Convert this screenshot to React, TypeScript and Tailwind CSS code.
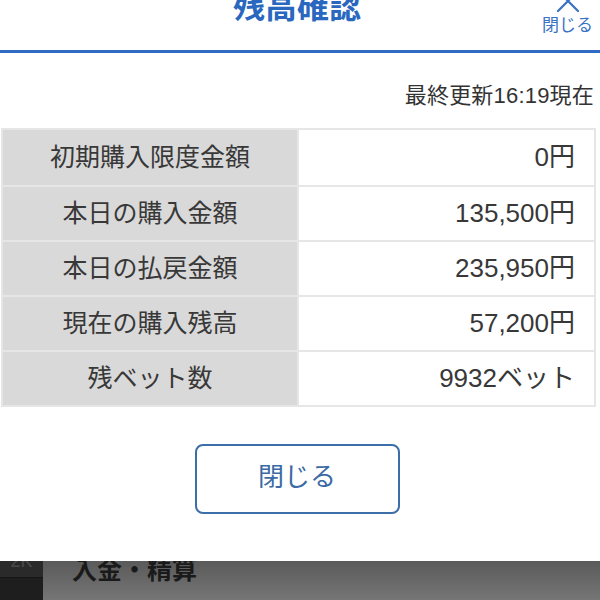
import React from 'react';

const rows = [
  { label: '初期購入限度金額', value: '0円' },
  { label: '本日の購入金額', value: '135,500円' },
  { label: '本日の払戻金額', value: '235,950円' },
  { label: '現在の購入残高', value: '57,200円' },
  { label: '残ベット数', value: '9932ベット' },
];

export default function App() {
  return (
    <div
      className="w-[600px] h-[600px] overflow-hidden flex flex-col bg-white"
      style={{ fontFamily: '"Liberation Sans", "Noto Sans CJK JP", sans-serif' }}
    >
      {/* Modal */}
      <div className="h-[561px] shrink-0 bg-white flex flex-col">
        {/* Header */}
        <div className="-mt-[27px] h-[80px] shrink-0 border-b-[3px] border-[#2f6bc2] relative flex justify-center">
          <h2 className="pt-[18px] ml-[-6px] text-[32px] leading-[32px] font-bold text-[#2a67be]">残高確認</h2>
          <button className="absolute right-[7px] top-[17px] flex flex-col items-center text-[#3a72c4]">
            <svg width="26" height="22" viewBox="0 0 26 22" fill="none" stroke="currentColor" strokeWidth="2.2" strokeLinecap="round">
              <path d="M3 1 L23 21 M23 1 L3 21" />
            </svg>
            <span className="mt-[5px] text-[17px] leading-[17px]">閉じる</span>
          </button>
        </div>

        {/* Timestamp */}
        <div className="mt-[31px] pr-[6px] text-right text-[22px] leading-[24px] text-[#333] tracking-[0.2px]">
          最終更新16:19現在
        </div>

        {/* Table */}
        <div className="mt-[20px] ml-[1px] mr-[4px] border-2 border-[#e6e6e6] flex flex-col">
          {rows.map((r, i) => (
            <div key={r.label} className={`flex h-[55px] ${i > 0 ? 'border-t-2 border-[#e6e6e6]' : ''}`}>
              <div className="w-[296px] shrink-0 bg-[#d9d9d9] border-r-2 border-[#e6e6e6] flex items-center justify-center text-[25px] text-[#383838]">
                {r.label}
              </div>
              <div className="flex-1 flex items-center justify-end pr-[19px] text-[26px] text-[#383838]">
                {r.value}
              </div>
            </div>
          ))}
        </div>

        {/* Close button */}
        <div className="mt-[37px] flex justify-center">
          <button className="w-[205px] h-[70px] border-2 border-[#3c6ea8] rounded-[8px] text-[26px] text-[#3c6aa4] flex items-center justify-center ml-[-6px] pb-[3px]">
            閉じる
          </button>
        </div>
      </div>

      {/* Page behind the dim overlay */}
      <div className="flex-1 flex bg-gradient-to-b from-[#5a5a5a] to-[#767676] overflow-hidden">
        <div className="w-[43px] shrink-0 bg-[#1e1e1e] flex flex-col">
          <div className="h-[17px] bg-[#2a2a2a] border-b border-[#151515] overflow-hidden flex justify-center">
            <span className="-mt-[12px] text-[18px] leading-[24px] text-[#4a4a4a]">2K</span>
          </div>
        </div>
        <div
          className="pl-[29px] -mt-[10px] text-[25px] leading-[34px] font-bold text-[#1a1a1a]"
          style={{ fontFamily: '"Noto Sans CJK JP", sans-serif' }}
        >
          入金・精算
        </div>
      </div>
    </div>
  );
}
